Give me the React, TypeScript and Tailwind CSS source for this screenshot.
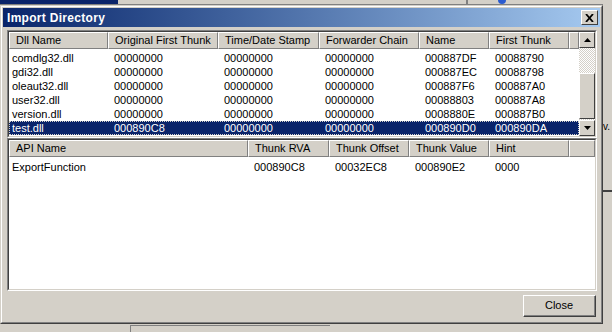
const imports = [
  ["comdlg32.dll", "00000000", "00000000", "00000000", "000887DF", "00088790"],
  ["gdi32.dll", "00000000", "00000000", "00000000", "000887EC", "00088798"],
  ["oleaut32.dll", "00000000", "00000000", "00000000", "000887F6", "000887A0"],
  ["user32.dll", "00000000", "00000000", "00000000", "00088803", "000887A8"],
  ["version.dll", "00000000", "00000000", "00000000", "0008880E", "000887B0"],
  ["test.dll", "000890C8", "00000000", "00000000", "000890D0", "000890DA"],
];

const topCols = [
  { label: "Dll Name", w: "w-[99px]" },
  { label: "Original First Thunk", w: "w-[110px]" },
  { label: "Time/Date Stamp", w: "w-[101px]" },
  { label: "Forwarder Chain", w: "w-[100px]" },
  { label: "Name", w: "w-[70px]" },
  { label: "First Thunk", w: "w-[80px]" },
];

const apiCols = [
  { label: "API Name", w: "w-[239px]" },
  { label: "Thunk RVA", w: "w-[81px]" },
  { label: "Thunk Offset", w: "w-[80px]" },
  { label: "Thunk Value", w: "w-[80px]" },
  { label: "Hint", w: "w-[80px]" },
];

function HeaderCell({ label, w }: { label: string; w: string }) {
  return (
    <div
      className={`${w} h-[17px] shrink-0 bg-[#d4d0c8] border-t border-l border-t-white border-l-white border-r border-b border-r-[#808080] border-b-[#808080] pl-[6px] leading-[15px] truncate`}
    >
      {label}
    </div>
  );
}

function Arrow({ up }: { up?: boolean }) {
  return (
    <div className="w-[16px] h-[16px] shrink-0 bg-[#d4d0c8] border border-t-white border-l-white border-r-[#404040] border-b-[#404040] flex items-center justify-center">
      <svg width="7" height="4" viewBox="0 0 7 4">
        <path d={up ? "M3.5 0 L7 4 L0 4 Z" : "M0 0 L7 0 L3.5 4 Z"} fill="#000" />
      </svg>
    </div>
  );
}

export default function App() {
  return (
    <div
      className="w-[612px] h-[332px] bg-[#d4d0c8] relative overflow-hidden text-[11px] text-black"
      style={{ fontFamily: '"Liberation Sans", Arial, sans-serif' }}
    >
      {/* desktop behind the dialog */}
      <div className="h-[5px] flex border-b border-[#808080]">
        <div className="w-[118px] bg-[#0a246a]" />
        <div className="w-[350px] border-r-2 border-[#808080]" />
        <div className="ml-[30px] mt-[-4px] w-[8px] h-[8px] rounded-full bg-[#2a5bd0]" />
      </div>
      <div className="absolute right-0 top-0 w-[9px] h-full bg-[#d4d0c8]">
        <div className="mt-[190px] h-[2px] bg-[#404040]" />
      </div>
      <div className="absolute left-[603px] top-[119px] text-[10px]">v.</div>
      <div className="absolute left-[130px] top-[325px] w-[200px] h-[7px] border-t border-l border-[#808080]" />

      <div className="absolute left-0 top-[5px] w-[603px] h-[319px] bg-[#d4d0c8] border border-t-[#d4d0c8] border-l-[#d4d0c8] border-r-[#404040] border-b-[#404040]">
        <div className="h-full border border-t-white border-l-white border-r-[#808080] border-b-[#808080] p-[1px] flex flex-col">
          {/* title bar */}
          <div className="h-[19px] flex items-center justify-between pl-[4px] pr-[2px] bg-gradient-to-r from-[#0a246a] to-[#a6caf0]">
            <span className="text-white font-bold text-[12px] tracking-[0.3px]">Import Directory</span>
            <div className="w-[17px] h-[15px] bg-[#d4d0c8] border border-t-white border-l-white border-r-[#404040] border-b-[#404040] flex items-center justify-center">
              <svg width="9" height="8" viewBox="0 0 9 8">
                <path d="M1 0 L8 8 M8 0 L1 8" stroke="#000" strokeWidth="1.8" />
              </svg>
            </div>
          </div>

          {/* top list */}
          <div className="mt-[3px] ml-[4px] w-[590px] h-[108px] border border-t-[#808080] border-l-[#808080] border-r-white border-b-white">
            <div className="h-full border border-t-[#404040] border-l-[#404040] border-r-[#d4d0c8] border-b-[#d4d0c8] bg-white flex">
              <div className="flex-1 flex flex-col overflow-hidden">
                <div className="flex">
                  {topCols.map((c) => (
                    <HeaderCell key={c.label} {...c} />
                  ))}
                  <div className="flex-1 h-[17px] bg-[#d4d0c8] border-t border-l border-t-white border-l-white border-b border-r border-b-[#808080] border-r-[#808080]" />
                </div>
                <div className="pt-[2px]">
                  {imports.map((row) => {
                    const sel = row[0] === "test.dll";
                    return (
                      <div
                        key={row[0]}
                        className={`flex h-[14px] leading-[14px] ${sel ? "bg-[#0a246a] text-white outline outline-1 outline-dotted outline-[#d4d0c8] -outline-offset-1" : ""}`}
                      >
                        {row.map((cell, i) => (
                          <div key={i} className={`${topCols[i].w} shrink-0 ${i === 0 ? "pl-[3px]" : "pl-[6px]"}`}>
                            {cell}
                          </div>
                        ))}
                      </div>
                    );
                  })}
                </div>
              </div>
              <div className="w-[16px] flex flex-col bg-[image:repeating-conic-gradient(#d4d0c8_0_25%,#ffffff_0_50%)] bg-[length:2px_2px]">
                <Arrow up />
                <div className="flex-1 flex flex-col justify-end pb-[1px]">
                  <div className="h-[46px] bg-[#d4d0c8] border border-t-white border-l-white border-r-[#404040] border-b-[#404040]" />
                </div>
                <Arrow />
              </div>
            </div>
          </div>

          {/* api list */}
          <div className="ml-[4px] w-[590px] h-[153px] border border-t-[#808080] border-l-[#808080] border-r-white border-b-white">
            <div className="h-full border border-t-[#404040] border-l-[#404040] border-r-[#d4d0c8] border-b-[#d4d0c8] bg-white flex flex-col">
              <div className="flex">
                {apiCols.map((c) => (
                  <HeaderCell key={c.label} {...c} />
                ))}
                <div className="flex-1 h-[17px] bg-[#d4d0c8] border-t border-l border-t-white border-l-white border-b border-r border-b-[#808080] border-r-[#808080]" />
              </div>
              <div className="flex h-[14px] leading-[14px] mt-[3px]">
                {["ExportFunction", "000890C8", "00032EC8", "000890E2", "0000"].map((cell, i) => (
                  <div key={i} className={`${apiCols[i].w} shrink-0 ${i === 0 ? "pl-[3px]" : "pl-[6px]"}`}>
                    {cell}
                  </div>
                ))}
              </div>
            </div>
          </div>

          {/* footer */}
          <div className="flex-1 flex justify-end items-start pt-[4px] pr-[4px]">
            <div className="w-[73px] h-[22px] border border-t-white border-l-white border-r-[#404040] border-b-[#404040]">
              <div className="h-full border-r border-b border-[#808080] flex items-center justify-center">Close</div>
            </div>
          </div>
        </div>
      </div>
    </div>
  );
}
